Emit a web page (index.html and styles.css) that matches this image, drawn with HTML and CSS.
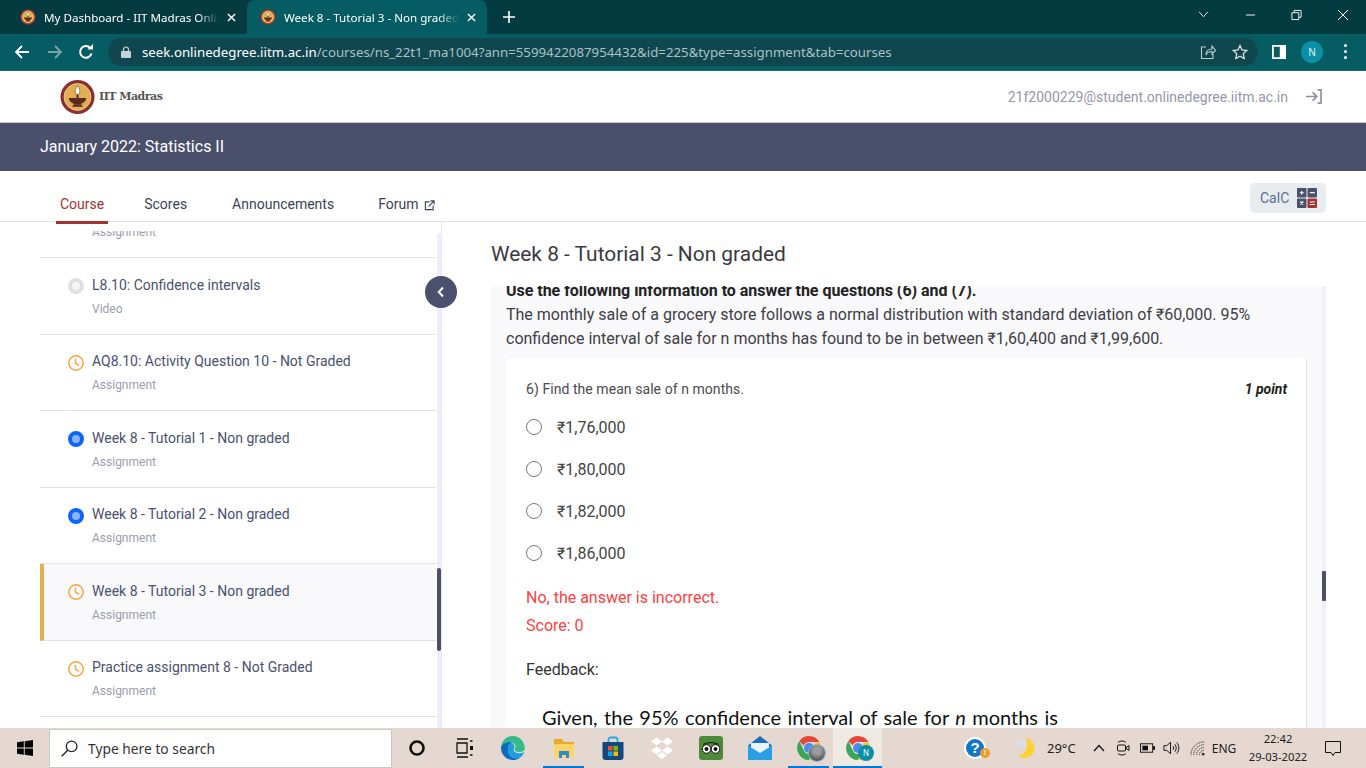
FILE: index.html
```html
<!DOCTYPE html>
<html lang="en">
<head>
<meta charset="utf-8">
<title>Week 8 - Tutorial 3 - Non graded</title>
<link rel="stylesheet" href="styles.css">
</head>
<body>
<svg class="defs" width="0" height="0" aria-hidden="true">
  <symbol id="iitm" viewBox="0 0 36 36">
    <circle cx="18" cy="18" r="17.500" fill="#8c2f30"/>
    <circle cx="18" cy="18" r="13.800" fill="#e2ae52" stroke="#f0d9a8" stroke-width=".8"/>
    <path d="M18 6c1.800 3 2.400 5 2.400 7a2.400 2.400 0 0 1-4.800 0c0-2 .6-4 2.400-7z" fill="#fff" stroke="#6b3a2a" stroke-width=".6"/>
    <path d="M9 19h18c-.5 4-4 6.500-9 6.500S9.500 23 9 19z" fill="#5b2a20"/>
    <path d="M14 25.500h8l1.500 2.500h-11z" fill="#5b2a20"/>
    <rect x="17" y="15.500" width="2" height="3.500" fill="#5b2a20"/>
  </symbol>
  <symbol id="clock" viewBox="0 0 16 16">
    <circle cx="8" cy="8" r="7.200" fill="none" stroke="#f9a43e" stroke-width="1.500"/>
    <path d="M7.500 3.800v4.600l3.400 2" fill="none" stroke="#f9a43e" stroke-width="1.500"/>
  </symbol>
  <symbol id="chromeball" viewBox="0 0 24 24">
    <path d="M12 0a12 12 0 0 1 10.400 6H12a6 6 0 0 0-5.500 3.500L2.400 5A12 12 0 0 1 12 0z" fill="#e5453a"/>
    <path d="M22.400 6A12 12 0 0 1 12 24l5.200-9A6 6 0 0 0 16.500 8z" fill="#fbc02d"/>
    <path d="M12 24A12 12 0 0 1 2.400 5l4.400 9.500A6 6 0 0 0 15 17.500z" fill="#3aa757"/>
    <circle cx="12" cy="12" r="5" fill="#4a8bf0"/>
  </symbol>
</svg>

<header class="tabstrip">
  <div class="tab">
    <svg class="favicon"><use href="#iitm"/></svg>
    <span class="tab-title">My Dashboard - IIT Madras Online Degree</span>
    <svg class="tab-close" viewBox="0 0 10 10"><path d="M1 1l8 8M9 1l-8 8"/></svg>
  </div>
  <div class="tab tab-active">
    <svg class="favicon"><use href="#iitm"/></svg>
    <span class="tab-title">Week 8 - Tutorial 3 - Non graded - Seek</span>
    <svg class="tab-close" viewBox="0 0 10 10"><path d="M1 1l8 8M9 1l-8 8"/></svg>
  </div>
  <svg class="tab-new" viewBox="0 0 12 12"><path d="M6 0v12M0 6h12"/></svg>
  <div class="win-controls">
    <svg class="win-btn win-chevron" viewBox="0 0 12 8"><path d="M1 1l5 5.500L11 1"/></svg>
    <svg class="win-btn win-min" viewBox="0 0 12 12"><path d="M1 6h10"/></svg>
    <svg class="win-btn win-restore" viewBox="0 0 12 12"><path d="M1 3.500h7.500V11H1zM3.500 3.500V1H11v7.500H8.500"/></svg>
    <svg class="win-btn win-x" viewBox="0 0 12 12"><path d="M1 1l10 10M11 1L1 11"/></svg>
  </div>
</header>

<nav class="toolbar">
  <svg class="tb-nav tb-back" viewBox="0 0 16 16"><path d="M15 8H2M8 2L2 8l6 6"/></svg>
  <svg class="tb-nav tb-forward" viewBox="0 0 16 16"><path d="M1 8h13M8 2l6 6-6 6"/></svg>
  <svg class="tb-nav tb-reload" viewBox="0 0 16 16"><path d="M13.500 9.500A5.800 5.800 0 1 1 12.200 4"/><path class="tb-fill" d="M9.500 5.500H15V0z"/></svg>
  <div class="omnibox">
    <svg class="lock" viewBox="0 0 10 12"><path d="M2.500 5V3.500a2.500 2.500 0 0 1 5 0V5" fill="none" stroke="#c6d3d5" stroke-width="1.200"/><rect y="5" width="10" height="7" rx="1" fill="#c6d3d5"/></svg>
    <span class="url"><span class="url-host">seek.onlinedegree.iitm.ac.in</span>/courses/ns_22t1_ma1004?ann=5599422087954432&amp;id=225&amp;type=assignment&amp;tab=courses</span>
    <svg class="omni-icon omni-share" viewBox="0 0 16 16"><path d="M6 3H1.500v11.500H13V10M6 11c0-4 2.500-6 6-6V2l3.500 4.500L12 10V7.500c-3 0-5 1-6 3.500z"/></svg>
    <svg class="omni-icon omni-star" viewBox="0 0 16 16"><path d="M8 1.500l2 4.500 4.800.5-3.600 3.200 1 4.800L8 12.200l-4.200 2.300 1-4.800L1.200 6.500 6 6z"/></svg>
  </div>
  <svg class="tb-panel" viewBox="0 0 14 14"><rect width="14" height="14" fill="#fff"/><rect x="1.800" y="1.800" width="6" height="10.400" fill="#0a5b62"/></svg>
  <span class="avatar">N</span>
  <span class="tb-dots"><i></i><i></i><i></i></span>
</nav>

<div class="site-head">
  <div class="brand">
    <svg class="brand-logo"><use href="#iitm"/></svg>
    <span class="brand-name">IIT Madras</span>
  </div>
  <div class="user">
    <span class="user-mail">21f2000229@student.onlinedegree.iitm.ac.in</span>
    <svg class="logout" viewBox="0 0 18 16"><path d="M1 8h11M8 3.500L12.500 8 8 12.500M13.500 1H17v14h-3.500"/></svg>
  </div>
</div>

<div class="band">January 2022: Statistics II</div>

<div class="course-nav">
  <a class="nav-link nav-active">Course</a>
  <a class="nav-link nav-scores">Scores</a>
  <a class="nav-link nav-ann">Announcements</a>
  <a class="nav-link nav-forum">Forum
    <svg class="ext" viewBox="0 0 12 12"><path d="M6 2H1.500v8.500H10V6M5 7l6-6M7 1h4v4"/></svg>
  </a>
  <button class="calc">CalC
    <svg class="calc-icon" viewBox="0 0 20 20">
      <rect width="9.500" height="9.500" rx="1" fill="#4a506e"/><rect x="10.500" width="9.500" height="9.500" rx="1" fill="#4a506e"/>
      <rect y="10.500" width="9.500" height="9.500" rx="1" fill="#4a506e"/><rect x="10.500" y="10.500" width="9.500" height="9.500" rx="1" fill="#a8322e"/>
      <path d="M3 4.700h3.500M4.700 3v3.500M12.800 4.700h5M3.300 13.500l3 3M6.300 13.500l-3 3M12.800 14h5M12.800 16.500h5" stroke="#fff" stroke-width="1.200"/>
    </svg>
  </button>
</div>

<main class="content">
  <aside class="side">
    <div class="side-list">
      <div class="item item-cut"><div class="item-sub">Assignment</div></div>
      <div class="item">
        <span class="ico"><span class="dot dot-gray"></span></span>
        <div><div class="item-title">L8.10: Confidence intervals</div><div class="item-sub">Video</div></div>
      </div>
      <div class="item">
        <span class="ico"><svg class="ic"><use href="#clock"/></svg></span>
        <div><div class="item-title">AQ8.10: Activity Question 10 - Not Graded</div><div class="item-sub">Assignment</div></div>
      </div>
      <div class="item">
        <span class="ico"><span class="dot dot-blue"></span></span>
        <div><div class="item-title">Week 8 - Tutorial 1 - Non graded</div><div class="item-sub">Assignment</div></div>
      </div>
      <div class="item">
        <span class="ico"><span class="dot dot-blue"></span></span>
        <div><div class="item-title">Week 8 - Tutorial 2 - Non graded</div><div class="item-sub">Assignment</div></div>
      </div>
      <div class="item item-active">
        <span class="ico"><svg class="ic"><use href="#clock"/></svg></span>
        <div><div class="item-title">Week 8 - Tutorial 3 - Non graded</div><div class="item-sub">Assignment</div></div>
      </div>
      <div class="item">
        <span class="ico"><svg class="ic"><use href="#clock"/></svg></span>
        <div><div class="item-title">Practice assignment 8 - Not Graded</div><div class="item-sub">Assignment</div></div>
      </div>
    </div>
    <span class="side-track"></span>
    <span class="side-thumb"></span>
    <span class="collapse"><svg viewBox="0 0 8 12"><path d="M6 1.500L1.800 6 6 10.500"/></svg></span>
  </aside>

  <section class="main">
    <h1 class="page-title">Week 8 - Tutorial 3 - Non graded</h1>
    <div class="panel">
      <div class="panel-text">
        <p class="lead">Use the following information to answer the questions (6) and (7).</p>
        <p>The monthly sale of a grocery store follows a normal distribution with standard deviation of ₹60,000. 95% confidence interval of sale for n months has found to be in between ₹1,60,400 and ₹1,99,600.</p>
      </div>
      <div class="card">
        <div class="q-row"><span class="q-text">6) Find the mean sale of n months.</span><span class="q-point">1 point</span></div>
        <div class="opt"><span class="radio"></span>₹1,76,000</div>
        <div class="opt"><span class="radio"></span>₹1,80,000</div>
        <div class="opt"><span class="radio"></span>₹1,82,000</div>
        <div class="opt"><span class="radio"></span>₹1,86,000</div>
        <p class="wrong wrong-first">No, the answer is incorrect.</p>
        <p class="wrong">Score: 0</p>
        <p class="feedback">Feedback:</p>
        <p class="math">Given, the 95% confidence interval of sale for <em>n</em> months is</p>
      </div>
      <span class="main-track"></span>
      <span class="main-thumb"></span>
    </div>
  </section>
</main>

<footer class="taskbar">
  <span class="start">
    <svg viewBox="0 0 16 16"><path d="M0 2.300l6.800-1v6.300H0zM7.700 1.200L16 0v7.600H7.700zM0 8.400h6.800v6.300l-6.800-1zM7.700 8.400H16V16l-8.300-1.200z" fill="#000"/></svg>
  </span>
  <div class="search">
    <svg class="search-ico" viewBox="0 0 16 16"><circle cx="10" cy="6" r="5" fill="none" stroke="#222" stroke-width="1.200"/><path d="M6.300 9.700L.7 15.300" stroke="#222" stroke-width="1.300"/></svg>
    Type here to search
  </div>
  <div class="apps">
    <span class="app"><svg class="ti" viewBox="0 0 24 24"><circle cx="12" cy="12" r="6.500" fill="none" stroke="#111" stroke-width="2.600"/></svg></span>
    <span class="app app-left"><svg class="ti" viewBox="0 0 24 24"><path d="M5 3h11M5 21h11M5 7h10v10H5z M18 5h2.500M18 19h2.500" fill="none" stroke="#111" stroke-width="1.300"/><rect x="18" y="10" width="3" height="4" fill="#111"/></svg></span>
    <span class="app app-left"><svg class="ti ti-big" viewBox="0 0 24 24"><path d="M23.800 12.500C23.500 5 18.500 0 12 0 5.500 0 .8 4.500 0 11c2-3.500 5.500-5 8.500-5 4 0 6 2.500 6 5 0 1-.5 1.500-1 2.500 0 1.500 2 2.500 4.500 2.500 3.500 0 5.800-1.500 5.800-3.500z" fill="#34bb8a"/><path d="M0 11c-.3 7 5 13 12 13 2.500 0 5-.8 7-2.300-5 1.500-10-.5-11.500-5C6 12 8 8 10.500 6.300 5.500 5 1.500 8 0 11z" fill="#0f6cbd"/><path d="M7.500 16.700C9 21.200 14 23.200 19 21.700c2-1.500 3.500-3.500 4.300-6-1 1-3 1.500-5.300 1.500-2.500 0-5-1-5.500-3.200 0-1 .5-1.500 1-2.500 0-2-1.500-4.500-3.500-5.200C8 8 6 12 7.500 16.700z" fill="#1b9de2"/></svg></span>
    <span class="app app-open"><svg class="ti ti-big" viewBox="0 0 24 24"><path d="M2 3h8l2 3h10v3H2z" fill="#e8ab2c"/><path d="M2 8h20v14H2z" fill="#fbd46a"/><path d="M7 22v-7h10v7h-3v-3h-4v3z" fill="#2a8ccf"/></svg></span>
    <span class="app"><svg class="ti ti-big" viewBox="0 0 24 24"><path d="M7.500 6V3.500a2 2 0 0 1 2-2h5a2 2 0 0 1 2 2V6" fill="none" stroke="#29a9e0" stroke-width="1.800"/><path d="M1.500 6h21v15a3 3 0 0 1-3 3h-15a3 3 0 0 1-3-3z" fill="#17477f"/><rect x="7" y="10" width="4.500" height="4.500" fill="#f25022"/><rect x="12.500" y="10" width="4.500" height="4.500" fill="#7fba00"/><rect x="7" y="15.500" width="4.500" height="4.500" fill="#00a4ef"/><rect x="12.500" y="15.500" width="4.500" height="4.500" fill="#ffb900"/></svg></span>
    <span class="app"><svg class="ti ti-big" viewBox="0 0 24 24" fill="#fff"><path d="M6.500 1.500L12 5.500l-5.500 4L1 5.500zM17.500 1.500L23 5.500l-5.500 4-5.500-4zM6.500 10.500L12 14.500l-5.500 4-5.500-4zM17.500 10.500l5.500 4-5.500 4-5.500-4zM12 16l5 3.500-5 3.500-5-3.500z"/></svg></span>
    <span class="app"><svg class="ti ti-big" viewBox="0 0 24 24"><rect width="24" height="24" rx="3" fill="#4f8a3a"/><circle cx="7.500" cy="13" r="4.300" fill="#fff" stroke="#111"/><circle cx="16.500" cy="13" r="4.300" fill="#fff" stroke="#111"/><circle cx="7.500" cy="13" r="2" fill="#111"/><circle cx="16.500" cy="13" r="2" fill="#111"/><path d="M4 8.500c5-2.500 11-2.500 16 0" fill="none" stroke="#111"/></svg></span>
    <span class="app"><svg class="ti ti-big" viewBox="0 0 24 24"><path d="M0 9.500L12 0l12 9.500L12 17z" fill="#1d6fb8"/><path d="M3 7h18v6l-9 5-9-5z" fill="#e8f3fb"/><path d="M0 9.500V24h24V9.500L12 17z" fill="#29a0e6"/></svg></span>
    <span class="app app-open"><svg class="ti ti-big" viewBox="0 0 24 24"><use href="#chromeball"/></svg><span class="badge badge-photo"></span></span>
    <span class="app app-open app-current"><svg class="ti ti-big" viewBox="0 0 24 24"><use href="#chromeball"/></svg><span class="badge badge-n">N</span></span>
  </div>
  <div class="tray">
    <span class="tray-help"><span class="help">?</span><span class="help-dot">!</span></span>
    <span class="tray-moon"><svg viewBox="0 0 22 24"><path d="M11 1A11 11 0 1 1 2 20C9.500 21 14.500 12 11 1z" fill="#fbd232"/><ellipse cx="6" cy="7" rx="5" ry="3" fill="#d5e2ea"/></svg></span>
    <span class="tray-temp">29°C</span>
    <span class="tray-slot tray-chev"><svg viewBox="0 0 12 8"><path d="M1 7l5-5.500L11 7" fill="none" stroke="#111" stroke-width="1.300"/></svg></span>
    <span class="tray-slot tray-meet"><svg viewBox="0 0 14 16"><path d="M2 2.500C4 .5 8 .5 10 2.500M2 13.500c2 2 6 2 8 0" fill="none" stroke="#111"/><rect x="1.500" y="5" width="8" height="6" rx="1" fill="none" stroke="#111"/><path d="M9.500 8l3.500-2.500v5z" fill="none" stroke="#111"/></svg></span>
    <span class="tray-slot tray-batt"><svg viewBox="0 0 16 10"><rect x=".5" y=".5" width="13" height="9" fill="none" stroke="#111"/><rect x="2.500" y="2.500" width="6" height="5" fill="#111"/><rect x="14" y="3" width="2" height="4" fill="#111"/></svg></span>
    <span class="tray-slot tray-vol"><svg viewBox="0 0 18 16"><path d="M1 5.500h3L8 2v12l-4-3.500H1z M10.500 6c1 1 1 3 0 4M12.500 4c2 2.500 2 5.500 0 8M14.500 2c3 3.500 3 8.500 0 12" fill="none" stroke="#111"/></svg></span>
    <span class="tray-slot tray-wifi"><svg viewBox="0 0 16 16"><path d="M1 15a14 14 0 0 1 14-14M4 15a11 11 0 0 1 11-11M7 15a8 8 0 0 1 8-8M10 15a5 5 0 0 1 5-5" fill="none" stroke="#333" stroke-dasharray="1.500 .8"/><circle cx="14" cy="14" r="1.500" fill="#333"/></svg></span>
    <span class="tray-eng">ENG</span>
    <span class="tray-clock"><span>22:42</span><span>29-03-2022</span></span>
    <span class="tray-note"><svg viewBox="0 0 16 16"><path d="M.5 1h15v11H10l-2 3-2-3H.5z" fill="none" stroke="#111"/></svg></span>
  </div>
</footer>
</body>
</html>
```

FILE: styles.css
```css
* { box-sizing: border-box; }
html, body { margin: 0; padding: 0; }
body {
  width: 1366px;
  height: 768px;
  overflow: hidden;
  display: flex;
  flex-direction: column;
  font-family: Roboto, "Noto Sans", sans-serif;
  color: #4a506e;
  background: #fff;
}
p, h1 { margin: 0; }
svg { display: block; }
.defs { position: absolute; }

/* browser chrome */
.tabstrip {
  height: 34px;
  flex: none;
  display: flex;
  align-items: stretch;
  background: #033b41;
}
.tab {
  width: 240px;
  margin-left: 7px;
  display: flex;
  align-items: center;
  padding: 0 11px 0 13px;
  color: #fff;
  font: 11.600px "Noto Sans", sans-serif;
}
.tab-active {
  margin-left: 0;
  background: #055c62;
  border-radius: 8px 8px 0 0;
}
.favicon { width: 16px; height: 16px; flex: none; margin-right: 8px; }
.tab-title {
  flex: 1;
  white-space: nowrap;
  overflow: hidden;
  -webkit-mask-image: linear-gradient(90deg, #000 88%, transparent 100%);
  mask-image: linear-gradient(90deg, #000 88%, transparent 100%);
}
.tab-close { width: 9px; height: 9px; margin-left: 8px; flex: none; }
.tab-close path, .tab-new path { stroke: #fff; stroke-width: 1.600; fill: none; }
.tab-new { width: 12px; height: 12px; margin: 11px 0 0 16px; }
.win-controls {
  margin-left: auto;
  display: flex;
  align-items: flex-start;
  padding: 8px 17px 0 0;
}
.win-btn { fill: none; stroke: #fff; stroke-width: 1; }
.win-chevron { width: 11px; height: 7px; margin: 3px 36px 0 0; }
.win-min { width: 11px; height: 12px; margin: 1px 35px 0 0; }
.win-restore { width: 11px; height: 12px; margin: 1px 35px 0 0; }
.win-x { width: 12px; height: 12px; margin-top: 1px; }

.toolbar {
  height: 37px;
  flex: none;
  display: flex;
  align-items: center;
  background: #055c62;
  border-bottom: 1px solid #0d7078;
  padding: 0 0 1px 14px;
}
.tb-nav { width: 16px; height: 16px; fill: none; stroke: #fff; stroke-width: 1.800; }
.tb-back { margin-right: 17px; }
.tb-forward { margin-right: 15px; stroke: #7aa3a6; }
.tb-reload { stroke-width: 2; }
.tb-fill { fill: #fff; stroke: none; }
.omnibox {
  width: 1150px;
  height: 28px;
  margin-left: 14px;
  display: flex;
  align-items: center;
  background: #10474f;
  border-radius: 14px;
  padding-left: 13px;
}
.lock { width: 10px; height: 12px; flex: none; margin-right: 11px; }
.url {
  flex: 1;
  white-space: nowrap;
  font: 13.260px "Noto Sans", sans-serif;
  color: #a9c1c4;
}
.url-host { color: #fff; }
.omni-icon { width: 16px; height: 16px; fill: none; stroke: #b9cccf; stroke-width: 1.100; flex: none; }
.omni-share { margin-right: 16px; }
.omni-star { margin-right: 10px; stroke-width: 1.300; stroke: #d5e2e3; }
.tb-panel { width: 14px; height: 14px; margin-left: 14px; }
.avatar {
  width: 22px;
  height: 22px;
  margin-left: 15px;
  border-radius: 50%;
  background: #0b8fa6;
  color: #e8f6f8;
  font: 10px/22px "Noto Sans", sans-serif;
  text-align: center;
}
.tb-dots { display: flex; flex-direction: column; gap: 3px; margin-left: 21px; }
.tb-dots i { width: 3px; height: 3px; border-radius: 50%; background: #fff; }

/* site head */
.site-head {
  height: 52px;
  flex: none;
  display: flex;
  align-items: center;
  justify-content: space-between;
  padding: 0 44px 0 60px;
  border-bottom: 1px solid #c8c8cc;
}
.brand { display: flex; align-items: center; }
.brand-logo { width: 35px; height: 36px; margin-right: 4px; }
.brand-name { font: bold 11px "DejaVu Serif", serif; color: #555; letter-spacing: -.5px; }
.user { display: flex; align-items: center; }
.user-mail { font-size: 14px; color: #9696a8; }
.logout { width: 17px; height: 15px; margin-left: 17px; fill: none; stroke: #8f8fa3; stroke-width: 1.800; }

.band {
  height: 48px;
  flex: none;
  background: #4a506c;
  color: #fff;
  font-size: 16px;
  line-height: 48px;
  padding-left: 40px;
}

.course-nav {
  height: 51px;
  flex: none;
  display: flex;
  align-items: flex-start;
  padding-left: 56px;
  border-bottom: 1px solid #e2e2e2;
}
.nav-link {
  font-size: 14px;
  line-height: 20px;
  color: #3b3f55;
  padding: 23px 4px 0;
  height: 53px;
  display: flex;
  align-items: flex-start;
}
.nav-active {
  color: #a5322e;
  border-bottom: 3px solid #a5322e;
}
.nav-scores { margin-left: 32px; }
.nav-ann { margin-left: 37px; }
.nav-forum { margin-left: 36px; }
.ext { width: 11px; height: 11px; margin: 6px 0 0 6px; fill: none; stroke: #3b3f55; stroke-width: 1.200; }
.calc {
  margin: 12px 40px 0 auto;
  width: 76px;
  height: 30px;
  padding: 0 9px 1px 10px;
  display: flex;
  align-items: center;
  justify-content: space-between;
  border: 0;
  border-radius: 5px;
  background: #e9ecef;
  color: #5a7098;
  font: 14px Roboto, sans-serif;
}
.calc-icon { width: 20px; height: 20px; }

/* content */
.content {
  flex: 1;
  min-height: 0;
  display: flex;
  overflow: hidden;
}
.side {
  position: relative;
  width: 442px;
  flex: none;
  padding: 0 5px 0 40px;
  border-right: 1px solid #e8e8f0;
}
.side-list {
  height: 506px;
  overflow: hidden;
  clip-path: inset(9px 0 0 0);
}
.item {
  height: 76.500px;
  display: flex;
  padding: 16.500px 0 0 28px;
  border-bottom: 1px solid #e2e2e6;
}
.item-cut { height: 36px; padding: 0 0 0 52px; }
.item-cut .item-sub { margin-top: 0; }
.item-active {
  background: #f9f9fc;
  border-left: 4px solid #e2b04e;
  padding-left: 24px;
}
.ico { width: 16px; height: 16px; flex: none; margin: 3.500px 8px 0 0; }
.ic { width: 16px; height: 16px; }
.dot { display: block; width: 16px; height: 16px; border-radius: 50%; }
.dot-gray { background: #f5f5f5; border: 4px solid #e0e0e0; }
.dot-blue { background: #8ab4ff; border: 4px solid #0d66f5; }
.item-title { font-size: 14px; line-height: 20px; color: #4a506e; }
.item-sub { font-size: 12px; line-height: 20px; margin-top: 4px; color: #9c9cae; }
.side-track {
  position: absolute;
  right: 0;
  top: 12px;
  bottom: 0;
  width: 4px;
  background: #eceffa;
}
.side-thumb {
  position: absolute;
  right: 0;
  top: 346px;
  width: 4px;
  height: 83px;
  background: #4a506e;
  border-radius: 2px;
}
.collapse {
  position: absolute;
  left: 425px;
  top: 54px;
  width: 32px;
  height: 32px;
  display: flex;
  align-items: center;
  justify-content: center;
  border-radius: 50%;
  background: #4a506e;
}
.collapse svg { width: 8px; height: 12px; fill: none; stroke: #fff; stroke-width: 2; }

.main {
  flex: 1;
  min-width: 0;
  display: flex;
  flex-direction: column;
  padding: 0 40px 0 49px;
}
.page-title {
  height: 64px;
  flex: none;
  font-size: 20.900px;
  font-weight: 400;
  line-height: 64px;
  color: #3a3a40;
}
.panel {
  position: relative;
  flex: 1;
  min-height: 0;
  overflow: hidden;
  background: #f9f9fc;
  padding: 0 20px 0 15px;
}
.panel-text {
  margin-top: -7px;
  font-size: 16px;
  line-height: 24px;
  color: #3e3e44;
}
.lead { font-weight: 700; color: #222; letter-spacing: -.03px; }
.card {
  margin-top: 8px;
  width: 801px;
  background: #fff;
  border-right: 1px solid #e2e2e2;
  padding: 20px 19px 0 20px;
}
.q-row {
  display: flex;
  justify-content: space-between;
  font-size: 14px;
  line-height: 20px;
  color: #4a4a50;
  margin-bottom: 7px;
}
.q-text { letter-spacing: .06px; }
.q-point { font-weight: 700; font-style: italic; color: #222; }
.opt {
  height: 42px;
  display: flex;
  align-items: center;
  font-size: 16px;
  color: #444;
}
.radio {
  width: 16px;
  height: 16px;
  border-radius: 50%;
  border: 1.500px solid #777;
  margin-right: 15px;
  background: #fff;
}
.wrong { font-size: 16px; line-height: 28px; color: #ff4040; }
.wrong-first { margin-top: 10px; }
.feedback { margin-top: 16px; font-size: 16px; line-height: 28px; color: #333; }
.math {
  margin: 18px 0 0 16px;
  font: 20px/30px Lato, sans-serif;
  word-spacing: 1.300px;
  color: #111;
  white-space: nowrap;
}
.main-track {
  position: absolute;
  right: 0;
  top: 0;
  bottom: 0;
  width: 4px;
  background: #eef1fc;
}
.main-thumb {
  position: absolute;
  right: 0;
  top: 285px;
  width: 4px;
  height: 30px;
  border-radius: 1px;
  background: #4a506e;
}

/* taskbar */
.taskbar {
  height: 40px;
  flex: none;
  display: flex;
  align-items: stretch;
  background: #e4d8d0;
  font-family: "Noto Sans", sans-serif;
  color: #111;
}
.start { width: 49px; display: flex; align-items: center; justify-content: center; }
.start svg { width: 16px; height: 16px; }
.search {
  width: 343px;
  display: flex;
  align-items: center;
  margin-top: 1px;
  background: #fff;
  border: 1px solid #c8c8c8;
  padding-left: 11px;
  font-size: 13.800px;
  color: #333;
}
.search-ico { width: 17px; height: 17px; margin-right: 10px; }
.apps { display: flex; }
.app {
  position: relative;
  width: 49px;
  display: flex;
  align-items: center;
  justify-content: center;
}
.app-left { padding-right: 3px; }
.app-open::after {
  content: "";
  position: absolute;
  left: 4px;
  right: 4px;
  bottom: 0;
  height: 2px;
  background: #0078d4;
}
.app-current { background: #efe9e4; }
.app-current::after { left: 0; right: 0; }
.ti { width: 24px; height: 24px; }
.badge {
  position: absolute;
  left: 25px;
  top: 17px;
  width: 16px;
  height: 16px;
  border-radius: 50%;
  text-align: center;
  font-size: 8px;
  line-height: 16px;
  color: #fff;
}
.badge-photo {
  background: radial-gradient(circle at 50% 35%, #9a9a9a 30%, #5c5c5c 70%);
  box-shadow: 0 0 0 1px #7fb6e8;
}
.badge-n { background: #0b8fa6; }
.tray {
  margin-left: auto;
  display: flex;
  align-items: center;
  font-size: 12px;
  color: #222;
}
.tray-help { position: relative; width: 44px; height: 40px; display: flex; align-items: center; justify-content: center; }
.help {
  width: 22px;
  height: 22px;
  border-radius: 50%;
  border: 2px solid #fff;
  background: #1476c6;
  color: #fff;
  font: bold 15px/18px "Liberation Sans", sans-serif;
  text-align: center;
}
.help-dot {
  position: absolute;
  left: 27px;
  top: 20px;
  width: 10px;
  height: 10px;
  border-radius: 50%;
  background: #ee9c2a;
  color: #fff;
  font: bold 7px/10px "Liberation Sans", sans-serif;
  text-align: center;
}
.tray-moon { width: 43px; margin-left: 7px; display: flex; justify-content: center; }
.tray-moon svg { width: 20px; height: 24px; }
.tray-temp { width: 40px; font-size: 13px; }
.tray-slot { display: flex; justify-content: center; }
.tray-chev { width: 23px; }
.tray-chev svg { width: 12px; height: 8px; }
.tray-meet { width: 26px; }
.tray-meet svg { width: 14px; height: 16px; }
.tray-batt { width: 22px; }
.tray-batt svg { width: 15px; height: 10px; }
.tray-vol { width: 26px; }
.tray-vol svg { width: 17px; height: 16px; }
.tray-wifi { width: 26px; }
.tray-wifi svg { width: 15px; height: 15px; }
.tray-eng { width: 28px; text-align: center; }
.tray-clock {
  width: 80px;
  display: flex;
  flex-direction: column;
  align-items: center;
  font-size: 11.200px;
  line-height: 18px;
}
.tray-note { width: 48px; padding-left: 7px; }
.tray-note svg { width: 16px; height: 17px; }
```
